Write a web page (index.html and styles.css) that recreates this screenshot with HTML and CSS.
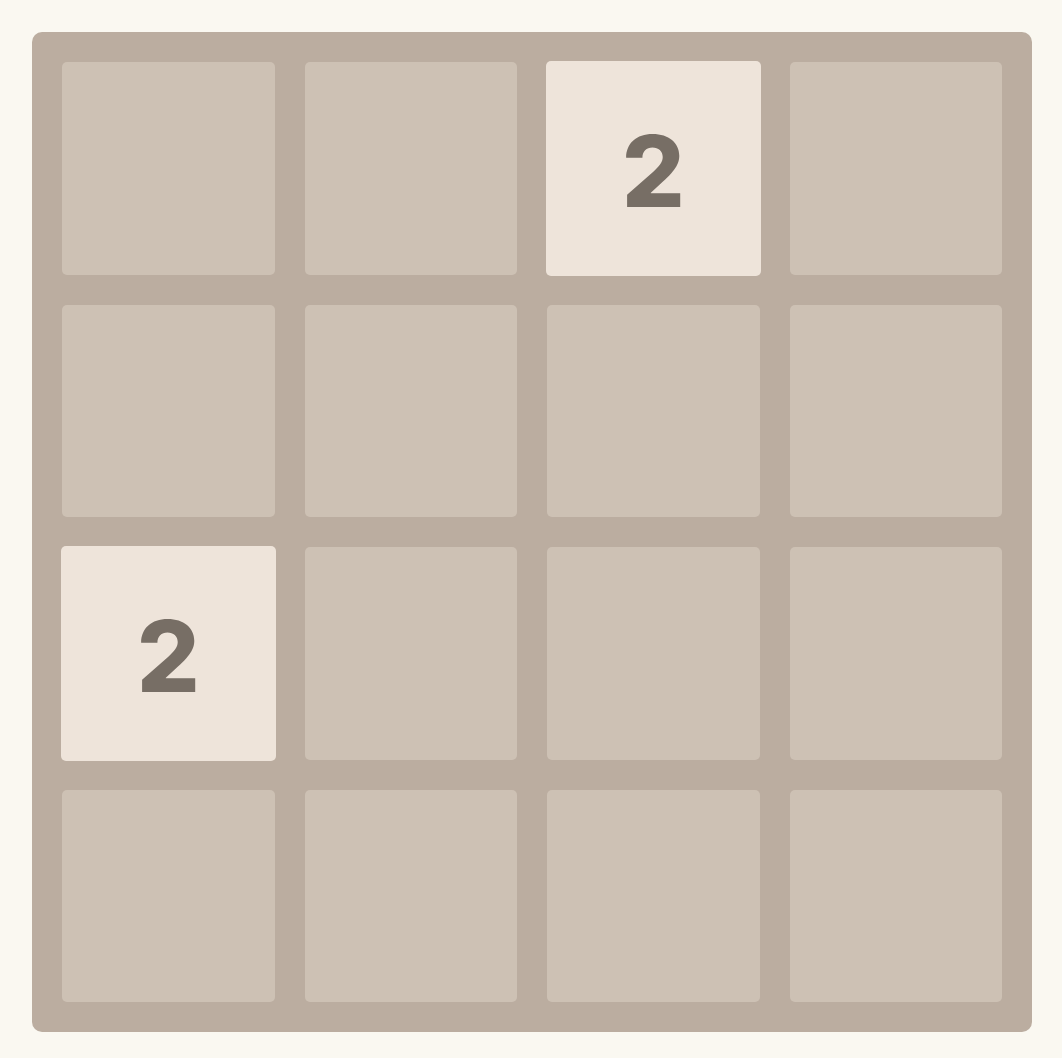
FILE: index.html
```
<!DOCTYPE html>
<html lang="en">
<head>
  <meta charset="UTF-8">
  <meta name="viewport" content="width=device-width, initial-scale=1.0">
  <title>2048</title>
  <link rel="stylesheet" href="styles.css">
</head>
<body>

  <!-- 4x4 game board, row by row -->
  <div class="board">
    <div class="cell"></div>
    <div class="cell"></div>
    <div class="cell tile tile-2">2</div>
    <div class="cell"></div>

    <div class="cell"></div>
    <div class="cell"></div>
    <div class="cell"></div>
    <div class="cell"></div>

    <div class="cell tile tile-2">2</div>
    <div class="cell"></div>
    <div class="cell"></div>
    <div class="cell"></div>

    <div class="cell"></div>
    <div class="cell"></div>
    <div class="cell"></div>
    <div class="cell"></div>
  </div>

</body>
</html>
```

FILE: styles.css
```
body {
  margin: 0;
  padding: 32px;
  background-color: #faf8f1;
  font-family: Inter, "Liberation Sans", sans-serif;
}

/* Board frame */
.board {
  display: grid;
  grid-template-columns: repeat(4, 1fr);
  grid-template-rows: repeat(4, 1fr);
  gap: 30px;
  padding: 30px;
  width: 1000px;
  height: 1000px;
  box-sizing: border-box;
  background-color: #bbada0;
  border-radius: 10px;
}

/* Empty slots */
.cell {
  background-color: #cdc1b4;
  border-radius: 5px;
}

/* Numbered tiles sit a touch larger than the slot */
.tile {
  margin: -1px;
  display: flex;
  align-items: center;
  justify-content: center;
  padding-top: 6px;
  box-sizing: border-box;
  font-weight: 800;
  font-size: 99px;
  line-height: 1;
}

.tile-2 {
  background-color: #eee4da;
  color: #776e65;
}
```
